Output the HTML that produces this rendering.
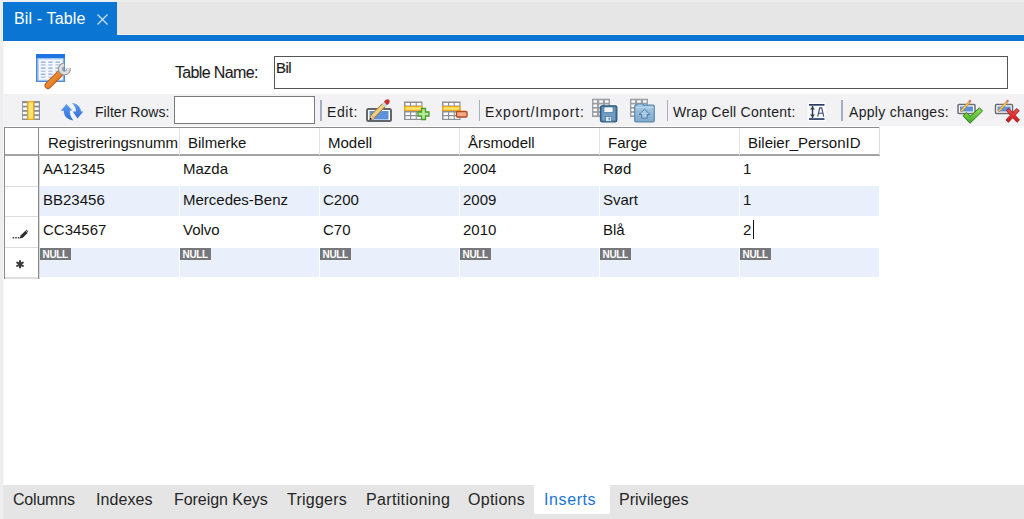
<!DOCTYPE html>
<html><head><meta charset="utf-8">
<style>
*{margin:0;padding:0;box-sizing:border-box}
html,body{width:1024px;height:519px;overflow:hidden;background:#eeeef0;font-family:"Liberation Sans",sans-serif;color:#1e1e1e}
.a{position:absolute}
.t{position:absolute;white-space:nowrap;line-height:1}
.g{font-size:15px;color:#141414}
.tb{font-size:14px;color:#1c1c1c}
.null{position:absolute;width:31px;height:12px;background:#75777b;color:#fff;font-weight:bold;font-size:10px;line-height:13px;text-align:center;letter-spacing:-0.35px;text-indent:-0.5px}
.bt{position:absolute;white-space:nowrap;line-height:1;font-size:16px;color:#262626}

</style></head><body>
<!-- tab strip -->
<div class="a" style="left:3px;top:2px;width:1021px;height:33px;background:#e6e6e6"></div>
<div class="a" style="left:117px;top:34px;width:907px;height:1px;background:#f3f1ee"></div>
<div class="a" style="left:3px;top:2px;width:114px;height:39px;background:#0a75d3"></div>
<div class="a" style="left:3px;top:35px;width:1021px;height:6px;background:#0a75d3"></div>
<div class="t" style="left:14px;top:11px;font-size:16px;color:#fff;letter-spacing:0.15px">Bil - Table</div>
<svg class="a" style="left:97px;top:14px" width="11" height="11"><path d="M0.5 0.5L10.5 10.5M10.5 0.5L0.5 10.5" stroke="#cfe3f7" stroke-width="1.2"/></svg>
<!-- header panel -->
<div class="a" style="left:3px;top:41px;width:1021px;height:53px;background:#fff"></div>
<div class="t" style="left:175px;top:65px;font-size:16px;letter-spacing:-0.65px;-webkit-text-stroke:0.1px #1e1e1e">Table Name:</div>
<div class="a" style="left:274px;top:56px;width:734px;height:33px;border:1px solid #555;background:#fff"></div>
<div class="t" style="left:276px;top:60px;font-size:15px;letter-spacing:-0.6px;-webkit-text-stroke:0.2px #1e1e1e">Bil</div>
<!-- toolbar -->
<div class="a" style="left:3px;top:94px;width:1021px;height:32px;background:#f2f2f5"></div>
<div class="t tb" style="left:95px;top:105px;letter-spacing:0.05px">Filter Rows:</div>
<div class="a" style="left:174px;top:96px;width:141px;height:28px;border:1.5px solid #7a7a7a;background:#fff"></div>
<div class="a" style="left:320px;top:100px;width:1.5px;height:21px;background:#a3aec0"></div>
<div class="t tb" style="left:327px;top:105px;letter-spacing:0.6px">Edit:</div>
<div class="a" style="left:478.5px;top:100px;width:1.5px;height:21px;background:#a3aec0"></div>
<div class="t tb" style="left:485px;top:105px;letter-spacing:0.85px">Export/Import:</div>
<div class="a" style="left:666.5px;top:100px;width:1.5px;height:21px;background:#a3aec0"></div>
<div class="t tb" style="left:673px;top:105px;letter-spacing:0.25px">Wrap Cell Content:</div>
<div class="a" style="left:841px;top:100px;width:1.5px;height:21px;background:#a3aec0"></div>
<div class="t tb" style="left:849px;top:105px;letter-spacing:0.3px">Apply changes:</div>
<!-- grid area -->
<div class="a" style="left:3px;top:126px;width:1021px;height:359px;background:#fff"></div>
<div class="a" style="left:3px;top:41px;width:1px;height:53px;background:#f6f6f7"></div><div class="a" style="left:3px;top:126px;width:1px;height:359px;background:#f6f6f7"></div>
<!-- bottom tabs -->
<div class="a" style="left:3px;top:485px;width:1021px;height:34px;background:#e5e5e5"></div>
<div class="a" style="left:534px;top:485px;width:76px;height:29px;background:#fff"></div>
<div class="bt" style="left:13px;top:492px;letter-spacing:-0.2px">Columns</div>
<div class="bt" style="left:96px;top:492px;letter-spacing:0.07px">Indexes</div>
<div class="bt" style="left:174px;top:492px;letter-spacing:-0.05px">Foreign Keys</div>
<div class="bt" style="left:287px;top:492px;letter-spacing:0.24px">Triggers</div>
<div class="bt" style="left:366px;top:492px;letter-spacing:0.34px">Partitioning</div>
<div class="bt" style="left:468px;top:492px;letter-spacing:0.27px">Options</div>
<div class="bt" style="left:544px;top:492px;letter-spacing:0.6px;color:#1a74d6">Inserts</div>
<div class="bt" style="left:619px;top:492px;letter-spacing:0.02px">Privileges</div>
<div class="a" style="left:4px;top:127px;width:876px;height:1px;background:#8c8c8c"></div>
<div class="a" style="left:4px;top:154px;width:876px;height:2px;background:#a4a4a4"></div>
<div class="a" style="left:4px;top:127px;width:1px;height:152px;background:#8c8c8c"></div>
<div class="a" style="left:38px;top:127px;width:1px;height:152px;background:#8c8c8c"></div><div class="a" style="left:39px;top:155px;width:1px;height:124px;background:#d8d8d8"></div>
<div class="a" style="left:879px;top:127px;width:1px;height:28px;background:#dcdcdc"></div>
<div class="a" style="left:179px;top:128px;width:1px;height:27px;background:#e3e3e3"></div>
<div class="a" style="left:319px;top:128px;width:1px;height:27px;background:#e3e3e3"></div>
<div class="a" style="left:459px;top:128px;width:1px;height:27px;background:#e3e3e3"></div>
<div class="a" style="left:599px;top:128px;width:1px;height:27px;background:#e3e3e3"></div>
<div class="a" style="left:739px;top:128px;width:1px;height:27px;background:#e3e3e3"></div>
<div class="a" style="left:5px;top:186px;width:33px;height:1px;background:#dcdcdc"></div>
<div class="a" style="left:5px;top:216px;width:33px;height:1px;background:#dcdcdc"></div>
<div class="a" style="left:5px;top:247px;width:33px;height:1px;background:#dcdcdc"></div>
<div class="a" style="left:5px;top:277px;width:33px;height:2px;background:#dedede"></div>
<div class="a" style="left:40px;top:186px;width:139px;height:30px;background:#e9f0fb"></div>
<div class="a" style="left:180px;top:186px;width:139px;height:30px;background:#e9f0fb"></div>
<div class="a" style="left:320px;top:186px;width:139px;height:30px;background:#e9f0fb"></div>
<div class="a" style="left:460px;top:186px;width:139px;height:30px;background:#e9f0fb"></div>
<div class="a" style="left:600px;top:186px;width:139px;height:30px;background:#e9f0fb"></div>
<div class="a" style="left:740px;top:186px;width:139px;height:30px;background:#e9f0fb"></div>
<div class="a" style="left:40px;top:248px;width:139px;height:29px;background:#e9f0fb"></div>
<div class="a" style="left:180px;top:248px;width:139px;height:29px;background:#e9f0fb"></div>
<div class="a" style="left:320px;top:248px;width:139px;height:29px;background:#e9f0fb"></div>
<div class="a" style="left:460px;top:248px;width:139px;height:29px;background:#e9f0fb"></div>
<div class="a" style="left:600px;top:248px;width:139px;height:29px;background:#e9f0fb"></div>
<div class="a" style="left:740px;top:248px;width:139px;height:29px;background:#e9f0fb"></div>
<div class="t g" style="left:48px;top:135px">Registreringsnumm</div>
<div class="t g" style="left:188px;top:135px">Bilmerke</div>
<div class="t g" style="left:328px;top:135px">Modell</div>
<div class="t g" style="left:468px;top:135px">Årsmodell</div>
<div class="t g" style="left:608px;top:135px">Farge</div>
<div class="t g" style="left:748px;top:135px">Bileier_PersonID</div>
<div class="t g" style="left:43px;top:161px">AA12345</div>
<div class="t g" style="left:183px;top:161px">Mazda</div>
<div class="t g" style="left:323px;top:161px">6</div>
<div class="t g" style="left:463px;top:161px">2004</div>
<div class="t g" style="left:603px;top:161px">Rød</div>
<div class="t g" style="left:743px;top:161px">1</div>
<div class="t g" style="left:43px;top:192px">BB23456</div>
<div class="t g" style="left:183px;top:192px">Mercedes-Benz</div>
<div class="t g" style="left:323px;top:192px">C200</div>
<div class="t g" style="left:463px;top:192px">2009</div>
<div class="t g" style="left:603px;top:192px">Svart</div>
<div class="t g" style="left:743px;top:192px">1</div>
<div class="t g" style="left:43px;top:222px">CC34567</div>
<div class="t g" style="left:183px;top:222px">Volvo</div>
<div class="t g" style="left:323px;top:222px">C70</div>
<div class="t g" style="left:463px;top:222px">2010</div>
<div class="t g" style="left:603px;top:222px">Blå</div>
<div class="t g" style="left:743px;top:222px">2</div>
<div class="null" style="left:40px;top:248px">NULL</div>
<div class="null" style="left:180px;top:248px">NULL</div>
<div class="null" style="left:320px;top:248px">NULL</div>
<div class="null" style="left:460px;top:248px">NULL</div>
<div class="null" style="left:600px;top:248px">NULL</div>
<div class="null" style="left:740px;top:248px">NULL</div>
<div class="a" style="left:752.5px;top:220px;width:1.6px;height:18.5px;background:#111"></div><svg class="a" style="left:0;top:0" width="1024" height="519" viewBox="0 0 1024 519">
<defs>
<linearGradient id="gBlue" x1="0" y1="0" x2="0" y2="1"><stop offset="0" stop-color="#5b9cf0"/><stop offset="1" stop-color="#2f6fd6"/></linearGradient>
<linearGradient id="gWr" x1="0" y1="0" x2="1" y2="1"><stop offset="0" stop-color="#f6a046"/><stop offset="1" stop-color="#d86a18"/></linearGradient>
<linearGradient id="gFold" x1="0" y1="0" x2="0" y2="1"><stop offset="0" stop-color="#a9cbe6"/><stop offset="1" stop-color="#7fa9cf"/></linearGradient>
<linearGradient id="gChk" x1="0" y1="0" x2="0" y2="1"><stop offset="0" stop-color="#8fe05a"/><stop offset="1" stop-color="#3fae22"/></linearGradient>
<linearGradient id="gX" x1="0" y1="0" x2="0" y2="1"><stop offset="0" stop-color="#f05050"/><stop offset="1" stop-color="#c81818"/></linearGradient>
</defs>
<!-- table icon -->
<rect x="36" y="54" width="29" height="28" fill="#4f8ad8"/>
<rect x="36" y="54" width="29" height="4.2" fill="#1e74e2"/>
<rect x="37.5" y="58.2" width="26" height="22.5" fill="#bcd6f5"/>
<rect x="39" y="59.6" width="23.5" height="20" fill="#f4f8fe"/>
<rect x="40.8" y="61.5" width="4.8" height="1.2" fill="#87a6d6"/><rect x="48.3" y="61.5" width="4.3" height="1.2" fill="#87a6d6"/><rect x="55.4" y="61.5" width="4.6" height="1.2" fill="#87a6d6"/><rect x="40.8" y="64.3" width="4.8" height="1.2" fill="#a5bde3"/><rect x="48.3" y="64.3" width="4.3" height="1.2" fill="#a5bde3"/><rect x="55.4" y="64.3" width="4.6" height="1.2" fill="#a5bde3"/><rect x="40.8" y="67.5" width="4.8" height="1.2" fill="#87a6d6"/><rect x="48.3" y="67.5" width="4.3" height="1.2" fill="#87a6d6"/><rect x="55.4" y="67.5" width="4.6" height="1.2" fill="#87a6d6"/><rect x="40.8" y="70.6" width="4.8" height="1.2" fill="#a5bde3"/><rect x="48.3" y="70.6" width="4.3" height="1.2" fill="#a5bde3"/><rect x="55.4" y="70.6" width="4.6" height="1.2" fill="#a5bde3"/><rect x="40.8" y="73.6" width="4.8" height="1.2" fill="#87a6d6"/><rect x="48.3" y="73.6" width="4.3" height="1.2" fill="#87a6d6"/><rect x="55.4" y="73.6" width="4.6" height="1.2" fill="#87a6d6"/><rect x="40.8" y="76.6" width="4.8" height="1.2" fill="#a5bde3"/><rect x="48.3" y="76.6" width="4.3" height="1.2" fill="#a5bde3"/><rect x="55.4" y="76.6" width="4.6" height="1.2" fill="#a5bde3"/>
<path d="M48 85.5 L59.5 74" stroke="#c05a18" stroke-width="7" stroke-linecap="round"/>
<path d="M48 85.5 L59.5 74" stroke="url(#gWr)" stroke-width="5" stroke-linecap="round"/>
<path d="M68.4 68.3 A4 4 0 1 1 64.2 65" stroke="#8e8e8e" stroke-width="4.8" fill="none"/><path d="M68.4 68.3 A4 4 0 1 1 64.2 65" stroke="#dedede" stroke-width="3" fill="none"/>
<!-- column icon -->
<rect x="22" y="101" width="18" height="19" fill="#8d9098"/>
<g fill="#fff"><rect x="22.8" y="103.2" width="4.3" height="2.4"/><rect x="34.5" y="103.2" width="4.3" height="2.4"/><rect x="22.8" y="107.5" width="4.3" height="2.4"/><rect x="34.5" y="107.5" width="4.3" height="2.4"/><rect x="22.8" y="111.8" width="4.3" height="2.4"/><rect x="34.5" y="111.8" width="4.3" height="2.4"/><rect x="22.8" y="116.1" width="4.3" height="2.4"/><rect x="34.5" y="116.1" width="4.3" height="2.4"/></g>
<rect x="27.3" y="101" width="6.9" height="19" fill="#f0a818"/>
<rect x="28.5" y="102.3" width="4.5" height="16.4" fill="#fbe672"/>
<!-- refresh icon -->
<path d="M66.5 104 L60.8 110.8 L63.8 110.8 C63.5 116 67 119.5 73.5 120.5 C71 118 69.5 114 69.8 110.6 L72.3 110.5 Z" fill="url(#gBlue)"/>
<path d="M72 103 C77.5 103.5 80.5 107 81 111.5 L83.3 111.5 L77.5 118.5 L72.7 111.5 L76 111.5 C76 108 74.5 105 72 103 Z" fill="url(#gBlue)"/>
<!-- edit pencil icon -->
<rect x="367" y="109" width="24" height="12" rx="1.5" fill="#fff" stroke="#62656b" stroke-width="2"/>
<rect x="369.5" y="111" width="19" height="8.5" fill="#5d91dc"/>
<path d="M372.5 116.5 L383.8 105.2" stroke="#a87a34" stroke-width="5"/>
<path d="M372.5 116.5 L383.8 105.2" stroke="#eed088" stroke-width="3.2"/>
<path d="M383.6 105.4 L385.6 103.4" stroke="#b7dfe9" stroke-width="4.6"/>
<path d="M385.5 103.5 L387.6 101.4" stroke="#d02a2a" stroke-width="4.6"/>
<circle cx="387.6" cy="101.4" r="2.1" fill="#d02a2a"/>
<path d="M369.6 120 L371 114.6 L375 118.6 Z" fill="#f0c49a" stroke="#a87a34" stroke-width="0.5"/>
<path d="M369.6 120 L370.3 117.6 L372 119.3 Z" fill="#1a1a1a"/>
<!-- add row icon -->
<rect x="404" y="101.5" width="18.5" height="18.5" fill="#8d9098"/>
<g fill="#fff">
<rect x="405.5" y="103" width="4.5" height="2.5"/><rect x="411.2" y="103" width="4.5" height="2.5"/><rect x="416.8" y="103" width="4.5" height="2.5"/>
<rect x="405.5" y="112.5" width="4.5" height="2.5"/><rect x="411.2" y="112.5" width="4.5" height="2.5"/><rect x="416.8" y="112.5" width="4.5" height="2.5"/>
<rect x="405.5" y="116.3" width="4.5" height="2.5"/><rect x="411.2" y="116.3" width="4.5" height="2.5"/><rect x="416.8" y="116.3" width="4.5" height="2.5"/>
</g>
<rect x="404" y="106" width="18.5" height="5" fill="#f0a818"/>
<rect x="405.5" y="107.2" width="15.5" height="2.6" fill="#fbe672"/>
<path d="M421.5 108.5 h4 v3.5 h3.5 v4 h-3.5 v3.5 h-4 v-3.5 h-3.5 v-4 h3.5 Z" fill="#b3ec92" stroke="#4e9a2c" stroke-width="1.3"/>
<!-- delete row icon -->
<rect x="442" y="101.5" width="18.5" height="18.5" fill="#8d9098"/>
<g fill="#fff">
<rect x="443.5" y="103" width="4.5" height="2.5"/><rect x="449.2" y="103" width="4.5" height="2.5"/><rect x="454.8" y="103" width="4.5" height="2.5"/>
<rect x="443.5" y="112.5" width="4.5" height="2.5"/><rect x="449.2" y="112.5" width="4.5" height="2.5"/><rect x="454.8" y="112.5" width="4.5" height="2.5"/>
<rect x="443.5" y="116.3" width="4.5" height="2.5"/><rect x="449.2" y="116.3" width="4.5" height="2.5"/><rect x="454.8" y="116.3" width="4.5" height="2.5"/>
</g>
<rect x="442" y="106" width="18.5" height="5" fill="#f0a818"/>
<rect x="443.5" y="107.2" width="15.5" height="2.6" fill="#fbe672"/>
<rect x="456.5" y="111.5" width="10.5" height="5.5" rx="1" fill="#f3a987" stroke="#b44a1c" stroke-width="1.4"/>
<!-- export icon -->
<rect x="592" y="98.7" width="18" height="18.3" fill="#9c9ea4"/><g fill="#fff"><rect x="593.4" y="100.3" width="3.6" height="2.4"/><rect x="599.2" y="100.3" width="3.6" height="2.4"/><rect x="605.0" y="100.3" width="3.6" height="2.4"/><rect x="593.4" y="104.5" width="3.6" height="2.4"/><rect x="599.2" y="104.5" width="3.6" height="2.4"/><rect x="605.0" y="104.5" width="3.6" height="2.4"/><rect x="593.4" y="108.7" width="3.6" height="2.4"/><rect x="599.2" y="108.7" width="3.6" height="2.4"/><rect x="605.0" y="108.7" width="3.6" height="2.4"/><rect x="593.4" y="112.9" width="3.6" height="2.4"/><rect x="599.2" y="112.9" width="3.6" height="2.4"/><rect x="605.0" y="112.9" width="3.6" height="2.4"/></g>
<rect x="600.5" y="105.8" width="16.3" height="16" rx="1.5" fill="#4f7fa6" stroke="#2e5c80" stroke-width="1.3"/>
<rect x="602.2" y="107.3" width="12.9" height="13" fill="#6f9cc2"/>
<rect x="604" y="107" width="9" height="5.4" fill="#f4f8fb" stroke="#3a6a90" stroke-width="0.6"/>
<rect x="605.6" y="116.3" width="6" height="5" fill="#dde7ee" stroke="#3a6a90" stroke-width="0.6"/>
<rect x="608.6" y="117.3" width="1.4" height="3" fill="#6f8ea8"/>
<!-- import icon -->
<rect x="630" y="98.7" width="18" height="18.3" fill="#9c9ea4"/><g fill="#fff"><rect x="631.4" y="100.3" width="3.6" height="2.4"/><rect x="637.2" y="100.3" width="3.6" height="2.4"/><rect x="643.0" y="100.3" width="3.6" height="2.4"/><rect x="631.4" y="104.5" width="3.6" height="2.4"/><rect x="637.2" y="104.5" width="3.6" height="2.4"/><rect x="643.0" y="104.5" width="3.6" height="2.4"/><rect x="631.4" y="108.7" width="3.6" height="2.4"/><rect x="637.2" y="108.7" width="3.6" height="2.4"/><rect x="643.0" y="108.7" width="3.6" height="2.4"/><rect x="631.4" y="112.9" width="3.6" height="2.4"/><rect x="637.2" y="112.9" width="3.6" height="2.4"/><rect x="643.0" y="112.9" width="3.6" height="2.4"/></g>

<path d="M634.7 108 L634.7 106.5 Q634.7 105.2 636 105.2 L636.5 105.2 L637 104 L643 104 L643.5 105.2 L653 105.2 Q654.3 105.2 654.3 106.5 L654.3 120.5 Q654.3 121.8 653 121.8 L636 121.8 Q634.7 121.8 634.7 120.5 Z" fill="url(#gFold)" stroke="#5a87ac" stroke-width="1.2"/>
<path d="M635.5 107.6 H653.5" stroke="#c5dcee" stroke-width="0.8"/>
<path d="M644.5 109.3 L650 114.5 L647.3 114.5 L647.3 118.2 L641.7 118.2 L641.7 114.5 L639 114.5 Z" fill="#a9c8e2" stroke="#4f7ea6" stroke-width="1"/>
<!-- wrap icon -->
<rect x="807.5" y="102.5" width="18.5" height="19" fill="#fafafa"/>
<g fill="#2b3c63">
<rect x="809" y="104" width="15.5" height="1.7"/>
<rect x="809" y="118.2" width="15.5" height="1.7"/>
<rect x="811.8" y="106" width="1.4" height="12"/>
<path d="M812.5 106.5 L815 109.5 L810 109.5 Z"/>
<path d="M812.5 117.5 L815 114.5 L810 114.5 Z"/>
</g>
<path d="M817.7 116.6 L819.7 107.9 L821.7 107.9 L823.7 116.6 M818.5 113.2 L822.9 113.2" stroke="#3b4b70" stroke-width="1.1" fill="none"/>
<!-- apply icon -->
<rect x="958" y="104.5" width="17" height="9" rx="1" fill="#fff" stroke="#6a6d72" stroke-width="1.5"/>
<rect x="960" y="106.5" width="13" height="5" fill="#5d91dc"/>
<path d="M961 111.5 L969.5 102" stroke="#c08a36" stroke-width="2.6"/>
<path d="M961.3 111 L969 102.5" stroke="#f5c860" stroke-width="1.3"/>
<circle cx="970" cy="101" r="1.3" fill="#e07070"/>
<path d="M963 115.8 L966.5 112.5 L970 116.3 L979.5 107.8 L982.5 111 L970 123.3 Z" fill="url(#gChk)" stroke="#2f7a1a" stroke-width="1"/>
<!-- cancel icon -->
<rect x="995.5" y="104.5" width="17" height="9" rx="1" fill="#fff" stroke="#6a6d72" stroke-width="1.5"/>
<rect x="997.5" y="106.5" width="13" height="5" fill="#5d91dc"/>
<path d="M998.5 111.5 L1007 102" stroke="#c08a36" stroke-width="2.6"/>
<path d="M998.8 111 L1006.5 102.5" stroke="#f5c860" stroke-width="1.3"/>
<circle cx="1007.5" cy="101" r="1.3" fill="#e07070"/>
<path d="M1006.5 110.5 L1009 108.5 L1012.7 112.6 L1016.6 108.5 L1019.3 110.8 L1015.2 115.3 L1019.5 120 L1017 122.3 L1012.7 117.8 L1008.5 122.3 L1006 120 L1010.2 115.3 Z" fill="url(#gX)" stroke="#9a1010" stroke-width="0.8"/>
<!-- row header pencil -->
<g fill="#3a3a3a"><rect x="12.6" y="237" width="1.5" height="1.5"/><rect x="15.2" y="237" width="1.5" height="1.5"/><rect x="17.8" y="237" width="1.5" height="1.5"/></g>
<path d="M19.6 238.6 L20.6 235.6 L25.4 230.8 L27.6 233 L22.8 237.8 Z" fill="#2e2e2e"/>
<path d="M25.6 230.4 L26.4 229.6 L28.4 231.6 L27.6 232.4Z" fill="#555"/>
<!-- asterisk -->
<g stroke="#3c3c3c" stroke-width="2" stroke-linecap="round"><path d="M20 261 V267.5 M17.2 262.6 L22.8 265.9 M22.8 262.6 L17.2 265.9"/></g>
<circle cx="20" cy="264.2" r="2.2" fill="#3c3c3c"/>
</svg>

</body></html>
